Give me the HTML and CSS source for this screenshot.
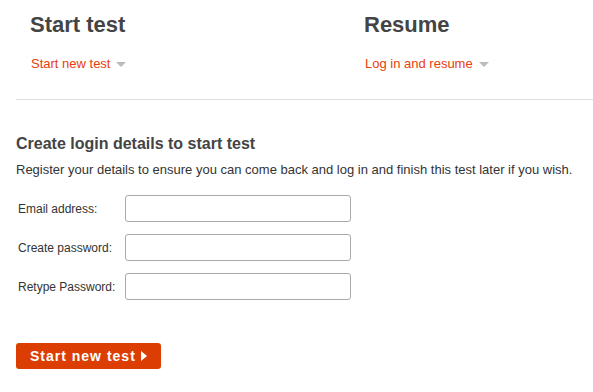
FILE: index.html
```html
<!DOCTYPE html>
<html>
<head>
  <title>Start test</title>
  <link rel="stylesheet" href="styles.css">
</head>
<body>
  <div class="choices">
    <div class="choice">
      <h2>Start test</h2>
      <a class="toggle" href="#">Start new test <span class="caret"></span></a>
    </div>
    <div class="choice">
      <h2>Resume</h2>
      <a class="toggle" href="#">Log in and resume <span class="caret"></span></a>
    </div>
  </div>

  <div class="register">
    <h3>Create login details to start test</h3>
    <p>Register your details to ensure you can come back and log in and finish this test later if you wish.</p>

    <form class="fields">
      <div class="field">
        <label for="email">Email address:</label>
        <input type="text" id="email">
      </div>
      <div class="field">
        <label for="password">Create password:</label>
        <input type="password" id="password">
      </div>
      <div class="field">
        <label for="password2">Retype Password:</label>
        <input type="password" id="password2">
      </div>
    </form>

    <button class="start">Start new test <span class="arrow"></span></button>
  </div>
</body>
</html>
```

FILE: styles.css
```css
:root {
  --text-color: #444444;
  --body-text: #333333;
  --link-color: #e8400c;
  --button-color: #dc3d02;
  --border-color: #dddddd;
  --input-border: #aaaaaa;
  --caret-color: #bbbbbb;
}

body {
  margin: 0;
  padding-left: 16px;
  font-family: 'Liberation Sans', Arial, Helvetica, sans-serif;
  background: #ffffff;
  color: var(--body-text);
  -webkit-font-smoothing: antialiased;
}

/* Top choices */
.choices {
  display: grid;
  grid-template-columns: 334px 1fr;
  padding: 12px 0 27px;
  border-bottom: 1px solid var(--border-color);
}

.choice {
  padding-left: 14px;
}

.choice h2 {
  margin: 0;
  font-size: 22px;
  line-height: 26px;
  font-weight: bold;
  color: var(--text-color);
}

.toggle {
  display: inline-flex;
  align-items: center;
  gap: 6px;
  margin-top: 18px;
  margin-left: 1px;
  font-size: 13px;
  line-height: 16px;
  color: var(--link-color);
  text-decoration: none;
}

.caret {
  width: 0;
  height: 0;
  border-left: 5px solid transparent;
  border-right: 5px solid transparent;
  border-top: 5px solid var(--caret-color);
  margin-top: 1px;
}

/* Registration */
.register h3 {
  margin: 34px 0 0;
  font-size: 16px;
  line-height: 20px;
  font-weight: bold;
  color: var(--text-color);
}

.register p {
  margin: 8px 0 0;
  font-size: 13px;
  line-height: 16px;
}

.fields {
  display: flex;
  flex-direction: column;
  gap: 12px;
  margin-top: 17px;
}

.field {
  display: flex;
  align-items: center;
}

.field label {
  width: 107px;
  padding-left: 2px;
  font-size: 12px;
  color: var(--body-text);
}

.field input {
  box-sizing: border-box;
  width: 226px;
  height: 27px;
  margin: 0;
  padding: 3px 6px;
  border: 1px solid var(--input-border);
  border-radius: 3px;
  background: #ffffff;
  font-family: inherit;
  font-size: 13px;
}

.start {
  display: flex;
  align-items: center;
  gap: 5px;
  height: 26px;
  width: 145px;
  margin-top: 43px;
  padding: 0 0 0 14px;
  border: none;
  border-radius: 3px;
  background: var(--button-color);
  color: #ffffff;
  font-family: inherit;
  font-size: 14px;
  font-weight: bold;
  letter-spacing: 1px;
  cursor: pointer;
}

.arrow {
  width: 0;
  height: 0;
  border-top: 5px solid transparent;
  border-bottom: 5px solid transparent;
  border-left: 6px solid #ffffff;
}
```
